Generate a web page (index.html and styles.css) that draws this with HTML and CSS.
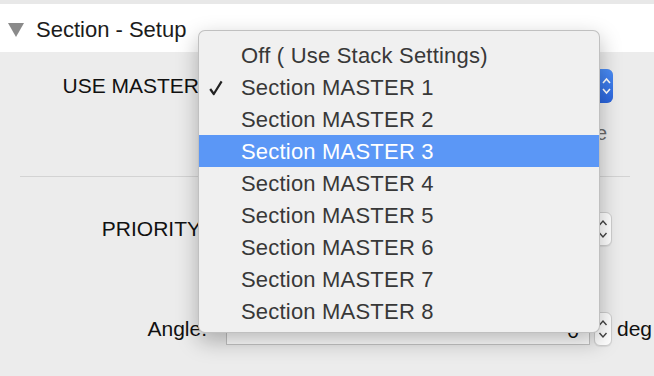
FILE: index.html
```html
<!DOCTYPE html>
<html lang="en">
<head>
    <meta charset="UTF-8">
    <title>Section - Setup</title>
    <link rel="stylesheet" href="styles.css">
</head>
<body>
    <div class="top-strip"></div>

    <div class="section-header">
        <span class="disclosure"></span>
        <span class="section-title">Section - Setup</span>
    </div>

    <div class="content">
        <div class="row row-master">
            <label class="label">USE MASTER</label>
            <div class="popup">
                <span class="popup-arrows">
                    <svg width="9" height="22" viewBox="0 0 9 22"><path d="M1 8 L4.5 4 L8 8 M1 14 L4.5 18 L8 14" fill="none" stroke="#fff" stroke-width="1.6"/></svg>
                </span>
            </div>
        </div>

        <div class="row row-note">
            <span class="note">e</span>
        </div>

        <div class="divider"></div>

        <div class="row row-priority">
            <label class="label">PRIORITY</label>
            <div class="field"></div>
            <div class="stepper">
                <svg width="10" height="26" viewBox="0 0 10 26"><path d="M1.5 9 L5 5 L8.5 9 M1.5 17 L5 21 L8.5 17" fill="none" stroke="#444" stroke-width="1.4"/></svg>
            </div>
        </div>

        <div class="row row-angle">
            <label class="label">Angle.</label>
            <div class="field"><span class="field-value">0</span></div>
            <div class="stepper">
                <svg width="10" height="26" viewBox="0 0 10 26"><path d="M1.5 9 L5 5 L8.5 9 M1.5 17 L5 21 L8.5 17" fill="none" stroke="#444" stroke-width="1.4"/></svg>
            </div>
            <span class="unit">deg</span>
        </div>
    </div>

    <!-- open popup menu -->
    <ul class="menu">
        <li class="menu-item">Off ( Use Stack Settings)</li>
        <li class="menu-item checked">
            <svg class="check" width="14" height="16" viewBox="0 0 14 16"><path d="M1.2 9 L4.8 14 L12.6 1.4" fill="none" stroke="#222" stroke-width="2.2" stroke-linejoin="round"/></svg>
            Section MASTER 1
        </li>
        <li class="menu-item">Section MASTER 2</li>
        <li class="menu-item selected">Section MASTER 3</li>
        <li class="menu-item">Section MASTER 4</li>
        <li class="menu-item">Section MASTER 5</li>
        <li class="menu-item">Section MASTER 6</li>
        <li class="menu-item">Section MASTER 7</li>
        <li class="menu-item">Section MASTER 8</li>
    </ul>
</body>
</html>
```

FILE: styles.css
```css
* {
    margin: 0;
    padding: 0;
    box-sizing: border-box;
}

body {
    font-family: 'Liberation Sans', Arial, sans-serif;
    background: #ececec;
    color: #111;
    width: 654px;
    height: 376px;
    overflow: hidden;
    position: relative;
}

.top-strip {
    height: 4px;
    background: #e8e8e8;
}

.section-header {
    height: 48px;
    background: #fff;
    display: flex;
    align-items: center;
    padding-left: 8px;
    gap: 12px;
}

.disclosure {
    width: 0;
    height: 0;
    border-left: 8.5px solid transparent;
    border-right: 8.5px solid transparent;
    border-top: 14px solid #8a8a8a;
    margin-top: 4px;
}

.section-title {
    font-size: 22px;
    color: #1c1c1c;
    margin-top: 3px;
}

.content {
    padding: 17px 0 0 20px;
}

.row {
    display: flex;
    align-items: center;
}

.row > * {
    flex-shrink: 0;
}

.label {
    width: 181px;
    text-align: right;
    font-size: 21px;
    margin-right: 25px;
    white-space: nowrap;
}

.row-master .label {
    width: 179px;
    margin-right: 27px;
}

.row-angle .label {
    width: 187px;
    margin-right: 19px;
}

.row-master {
    height: 34px;
}

.popup {
    width: 387px;
    height: 34px;
    background: #fff;
    border: 1px solid #c8c8c8;
    border-radius: 6px;
    display: flex;
    align-items: center;
    justify-content: flex-end;
}

.popup-arrows {
    width: 14px;
    height: 34px;
    margin-right: -1px;
    background: linear-gradient(#4a8cf5, #2a64dc);
    border-radius: 0 6px 6px 0;
    display: flex;
    align-items: center;
    justify-content: center;
}

.row-note {
    height: 24px;
    margin-top: 18px;
    width: 587px;
    justify-content: flex-end;
}

.note {
    font-size: 20px;
    color: #6a6a6a;
}

.divider {
    height: 1px;
    width: 610px;
    background: #d3d3d3;
    margin-top: 31px;
}

.row-priority {
    height: 34px;
    margin-top: 35px;
}

.row-angle {
    height: 34px;
    margin-top: 66px;
}

.field {
    width: 364px;
    height: 28px;
    background: #fff;
    border: 1px solid #c4c4c4;
    margin-right: 4px;
    display: flex;
    align-items: center;
    justify-content: flex-end;
    padding-right: 10px;
    font-size: 21px;
}

.row-angle .field {
    margin-top: 4px;
}

.stepper {
    width: 18px;
    height: 34px;
    background: #fff;
    border: 1px solid #cfcfcf;
    border-radius: 6px;
    display: flex;
    align-items: center;
    justify-content: center;
    box-shadow: 0 1px 1px rgba(0, 0, 0, 0.08);
}

.unit {
    font-size: 21px;
    margin-left: 5px;
}

.menu {
    position: absolute;
    left: 198px;
    top: 30px;
    width: 402px;
    height: 303px;
    list-style: none;
    background: #f0f0f0;
    border: 1px solid rgba(0, 0, 0, 0.2);
    border-radius: 7px;
    padding: 8px 0 0;
    box-shadow: 0 8px 22px rgba(0, 0, 0, 0.28);
}

.menu-item {
    height: 32px;
    display: flex;
    align-items: center;
    padding-left: 42px;
    padding-top: 2px;
    font-size: 22px;
    letter-spacing: 0.2px;
    color: #383838;
    position: relative;
}

.menu-item.selected {
    background: #5b97f6;
    color: #fff;
}

.check {
    position: absolute;
    left: 10px;
    top: 9px;
}
```
